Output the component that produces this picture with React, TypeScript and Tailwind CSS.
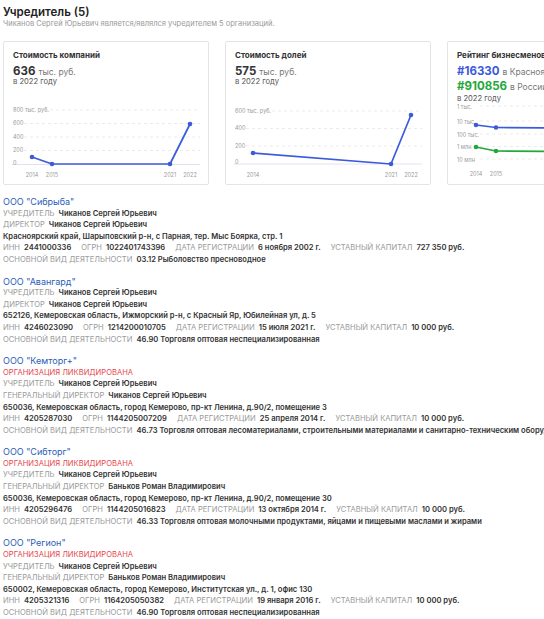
import React from "react";

type Company = {
  name: string;
  liquidated?: boolean;
  directorLabel: string;
  director: string;
  address: string;
  inn: string;
  ogrn: string;
  regDate: string;
  capital: string;
  activity: string;
};

const companies: Company[] = [
  {
    name: 'ООО "Сибрыба"',
    directorLabel: "ДИРЕКТОР",
    director: "Чиканов Сергей Юрьевич",
    address: "Красноярский край, Шарыповский р-н, с Парная, тер. Мыс Боярка, стр. 1",
    inn: "2441000336",
    ogrn: "1022401743396",
    regDate: "6 ноября 2002 г.",
    capital: "727 350 руб.",
    activity: "03.12 Рыболовство пресноводное",
  },
  {
    name: 'ООО "Авангард"',
    directorLabel: "ДИРЕКТОР",
    director: "Чиканов Сергей Юрьевич",
    address: "652126, Кемеровская область, Ижморский р-н, с Красный Яр, Юбилейная ул, д. 5",
    inn: "4246023090",
    ogrn: "1214200010705",
    regDate: "15 июля 2021 г.",
    capital: "10 000 руб.",
    activity: "46.90 Торговля оптовая неспециализированная",
  },
  {
    name: 'ООО "Кемторг+"',
    liquidated: true,
    directorLabel: "ГЕНЕРАЛЬНЫЙ ДИРЕКТОР",
    director: "Чиканов Сергей Юрьевич",
    address: "650036, Кемеровская область, город Кемерово, пр-кт Ленина, д.90/2, помещение 3",
    inn: "4205287030",
    ogrn: "1144205007209",
    regDate: "25 апреля 2014 г.",
    capital: "10 000 руб.",
    activity:
      "46.73 Торговля оптовая лесоматериалами, строительными материалами и санитарно-техническим оборудованием",
  },
  {
    name: 'ООО "Сибторг"',
    liquidated: true,
    directorLabel: "ГЕНЕРАЛЬНЫЙ ДИРЕКТОР",
    director: "Баньков Роман Владимирович",
    address: "650036, Кемеровская область, город Кемерово, пр-кт Ленина, д.90/2, помещение 30",
    inn: "4205296476",
    ogrn: "1144205016823",
    regDate: "13 октября 2014 г.",
    capital: "10 000 руб.",
    activity: "46.33 Торговля оптовая молочными продуктами, яйцами и пищевыми маслами и жирами",
  },
  {
    name: 'ООО "Регион"',
    liquidated: true,
    directorLabel: "ГЕНЕРАЛЬНЫЙ ДИРЕКТОР",
    director: "Баньков Роман Владимирович",
    address: "650002, Кемеровская область, город Кемерово, Институтская ул., д. 1, офис 130",
    inn: "4205321316",
    ogrn: "1164205050382",
    regDate: "19 января 2016 г.",
    capital: "10 000 руб.",
    activity: "46.90 Торговля оптовая неспециализированная",
  },
];

const BLUE = "#3b5bdb";
const GREEN = "#22a83a";

// charts: svg 204x80, x from card inner left, y from page y 100
function Grid({ ys, labels }: { ys: number[]; labels: string[] }) {
  return (
    <>
      {ys.map((y, i) => (
        <g key={i}>
          <line x1={i === 0 ? 40 : 20} x2={196} y1={y} y2={y} stroke="#e3e3e3" strokeWidth={0.7} strokeDasharray="3 3" />
          <text x={9} y={y + 1.5} fontSize={5.5} fill="#9a9a9a">
            {labels[i]}
          </text>
        </g>
      ))}
    </>
  );
}

function XLabels({ pts }: { pts: [number, string][] }) {
  return (
    <>
      {pts.map(([x, l]) => (
        <text key={l} x={x} y={75.5} fontSize={5.5} fill="#9a9a9a" textAnchor="middle">
          {l}
        </text>
      ))}
    </>
  );
}

function Line({ pts, color, tail }: { pts: [number, number][]; color: string; tail?: number }) {
  const all = tail ? [...pts, [204, tail] as [number, number]] : pts;
  return (
    <>
      <polyline points={all.map((p) => p.join(",")).join(" ")} fill="none" stroke={color} strokeWidth={1.7} strokeLinejoin="round" />
      {pts.map(([x, y], i) => (
        <circle key={i} cx={x} cy={y} r={2.3} fill={color} />
      ))}
    </>
  );
}

function ValueChart() {
  return (
    <svg width={204} height={80} className="-ml-[9px] mt-[14.5px] block">
      <Grid ys={[9, 22.5, 36, 49.5]} labels={["800 тыс. руб.", "600", "400", "200"]} />
      <line x1={8} x2={196} y1={63.5} y2={63.5} stroke="#e4e0f2" strokeWidth={1} />
      <text x={9} y={63.5} fontSize={5.5} fill="#9a9a9a">0</text>
      <Line pts={[[28, 56], [48, 63], [166, 63], [186, 23]]} color={BLUE} />
      <XLabels pts={[[28, "2014"], [48, "2015"], [166, "2021"], [186, "2022"]]} />
    </svg>
  );
}

function SharesChart() {
  return (
    <svg width={204} height={80} className="-ml-[9px] mt-[14.5px] block">
      <Grid ys={[10, 27.5, 45]} labels={["600 тыс. руб.", "400", "200"]} />
      <line x1={8} x2={196} y1={63} y2={63} stroke="#e4e0f2" strokeWidth={1} />
      <text x={9} y={62.5} fontSize={5.5} fill="#9a9a9a">0</text>
      <Line pts={[[27, 52], [165, 63], [185, 14]]} color={BLUE} />
      <XLabels pts={[[27, "2014"], [165, "2021"], [185, "2022"]]} />
    </svg>
  );
}

const ratingTicks: [number, string][] = [
  [7, "1 тыс."],
  [22, "10 тыс."],
  [35, "100 тыс."],
  [47.5, "1 млн"],
  [60, "10 млн"],
];

function RatingChart() {
  return (
    <svg width={204} height={80} className="-ml-[9px] -mt-[2.5px] block">
      {ratingTicks.map(([y, l]) => (
        <g key={l}>
          <line x1={32} x2={204} y1={y - 1} y2={y - 1} stroke="#e3e3e3" strokeWidth={0.7} strokeDasharray="3 3" />
          <text x={9} y={y + 1.5} fontSize={5.5} fill="#9a9a9a">
            {l}
          </text>
        </g>
      ))}
      <Line pts={[[28, 25], [48, 27.5]]} color={BLUE} tail={28.5} />
      <Line pts={[[28, 47], [48, 51]]} color={GREEN} tail={52} />
      <XLabels pts={[[28, "2014"], [48, "2015"]]} />
    </svg>
  );
}

function Card({ children }: { children: React.ReactNode }) {
  return (
    <div className="w-[206px] h-[144px] shrink-0 border border-[#e4e4e4] rounded-[2px] bg-white px-[9px] pt-[8px] flex flex-col">
      {children}
    </div>
  );
}

function Stat({ value, unit, color }: { value: string; unit: string; color: string }) {
  return (
    <div className="flex items-baseline whitespace-nowrap h-[14px] pt-[1.5px]">
      <span className={`text-[11.5px] leading-none font-bold ${color}`}>{value}</span>
      <span className="ml-[3px] text-[8.5px] leading-none text-[#777]">{unit}</span>
    </div>
  );
}

function Row({ label, value }: { label: string; value: string }) {
  return (
    <div>
      <span className="text-[#9a9a9a]">{label}</span>
      <span className="ml-[4px] font-semibold text-[#333]">{value}</span>
    </div>
  );
}

export default function App() {
  return (
    <div className="w-[544px] h-[619px] overflow-hidden bg-white" style={{ fontFamily: "Inter, 'Noto Sans', sans-serif" }}>
      <div className="w-[700px] pl-[3px] pt-[5.5px] text-[#333]">
        <h2 className="text-[11.5px] leading-[13px] font-semibold text-[#222]">Учредитель (5)</h2>
        <p className="text-[7.5px] leading-[9px] text-[#9a9a9a]">
          Чиканов Сергей Юрьевич является/являлся учредителем 5 организаций.
        </p>

        <div className="mt-[13.5px] flex gap-[16px]">
          <Card>
            <div className="text-[8px] leading-[10px] font-bold text-[#333]">Стоимость компаний</div>
            <div className="mt-[4px]">
              <Stat value="636" unit="тыс. руб." color="text-[#333]" />
            </div>
            <div className="text-[7.6px] leading-[8px] text-[#555]">в 2022 году</div>
            <ValueChart />
          </Card>
          <Card>
            <div className="text-[8px] leading-[10px] font-bold text-[#333]">Стоимость долей</div>
            <div className="mt-[4px]">
              <Stat value="575" unit="тыс. руб." color="text-[#333]" />
            </div>
            <div className="text-[7.6px] leading-[8px] text-[#555]">в 2022 году</div>
            <SharesChart />
          </Card>
          <Card>
            <div className="text-[8px] leading-[10px] font-bold text-[#333] whitespace-nowrap">Рейтинг бизнесменов</div>
            <div className="mt-[4px] flex flex-col gap-[1px]">
              <Stat value="#16330" unit="в Красноярском крае" color="text-[#3b5bdb]" />
              <Stat value="#910856" unit="в России" color="text-[#22a83a]" />
            </div>
            <div className="mt-[0.5px] text-[7.6px] leading-[9px] text-[#555]">в 2022 году</div>
            <RatingChart />
          </Card>
        </div>

        <div className="mt-[11px] flex flex-col gap-[10px] whitespace-nowrap">
          {companies.map((c) => (
            <div key={c.inn} className="text-[7.6px] leading-[11.6px]">
              <div className="text-[9px] text-[#2a5cb8]">{c.name}</div>
              {c.liquidated && <div className="text-[#e5484d]">ОРГАНИЗАЦИЯ ЛИКВИДИРОВАНА</div>}
              <Row label="УЧРЕДИТЕЛЬ" value="Чиканов Сергей Юрьевич" />
              <Row label={c.directorLabel} value={c.director} />
              <div className="font-semibold text-[#333]">{c.address}</div>
              <div className="flex gap-[10px]">
                <Row label="ИНН" value={c.inn} />
                <Row label="ОГРН" value={c.ogrn} />
                <Row label="ДАТА РЕГИСТРАЦИИ" value={c.regDate} />
                <Row label="УСТАВНЫЙ КАПИТАЛ" value={c.capital} />
              </div>
              <Row label="ОСНОВНОЙ ВИД ДЕЯТЕЛЬНОСТИ" value={c.activity} />
            </div>
          ))}
        </div>
      </div>
    </div>
  );
}
